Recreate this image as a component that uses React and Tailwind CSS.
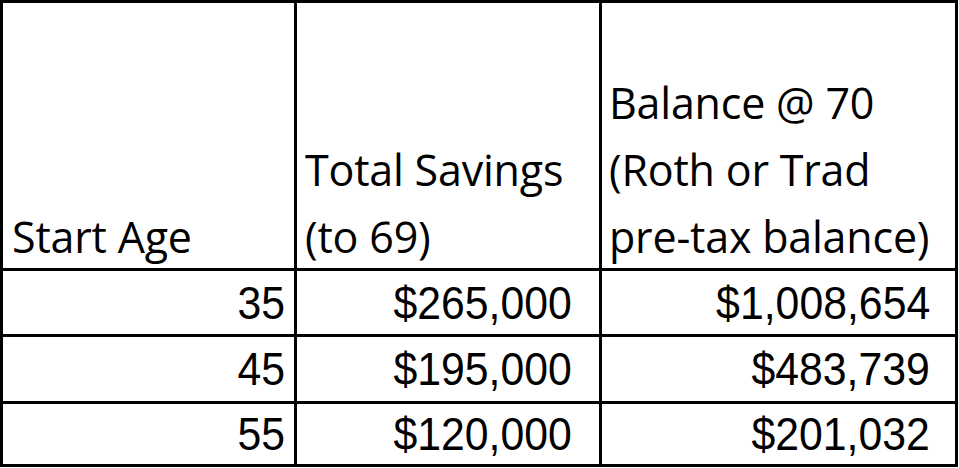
import React from 'react';

const rows = [
    ['35', '$265,000', '$1,008,654'],
    ['45', '$195,000', '$483,739'],
    ['55', '$120,000', '$201,032'],
];

const headFont = { fontFamily: '"Open Sans", "Noto Sans", sans-serif' };

export default function App() {
    return (
        <div className="w-[959px] h-[468px] bg-white">
            <div className="grid w-[958px] h-[467px] bg-black p-[3px] gap-[3px] grid-cols-[291px_302px_353px] grid-rows-[265px_63px_64px_60px] text-black">
                {/* Header */}
                <div className="bg-white flex items-end pl-[9px] text-[43px] leading-[67px] tracking-[-0.2px]" style={headFont}>
                    <div className="translate-y-[2px]">Start Age</div>
                </div>
                <div className="bg-white flex items-end pl-[8px] text-[43px] leading-[67px] tracking-[-0.2px]" style={headFont}>
                    <div className="translate-y-[2px]">Total Savings<br />(to 69)</div>
                </div>
                <div className="bg-white flex items-end pl-[7px] text-[43px] leading-[67px] tracking-[-0.2px]" style={headFont}>
                    <div className="translate-y-[2px]">Balance @ 70<br />(Roth or Trad<br />pre-tax balance)</div>
                </div>

                {/* Rows */}
                {rows.map((r) => (
                    <React.Fragment key={r[0]}>
                        <div className="bg-white flex items-center justify-end pr-[9px] font-['Liberation_Sans',sans-serif] text-[46px] leading-none">
                            <span className="inline-block scale-x-[0.93] origin-right">{r[0]}</span>
                        </div>
                        <div className="bg-white flex items-center justify-end pr-[27px] font-['Liberation_Sans',sans-serif] text-[46px] leading-none">
                            <span className="inline-block scale-x-[0.93] origin-right">{r[1]}</span>
                        </div>
                        <div className="bg-white flex items-center justify-end pr-[25px] font-['Liberation_Sans',sans-serif] text-[46px] leading-none">
                            <span className="inline-block scale-x-[0.93] origin-right">{r[2]}</span>
                        </div>
                    </React.Fragment>
                ))}
            </div>
        </div>
    );
}
